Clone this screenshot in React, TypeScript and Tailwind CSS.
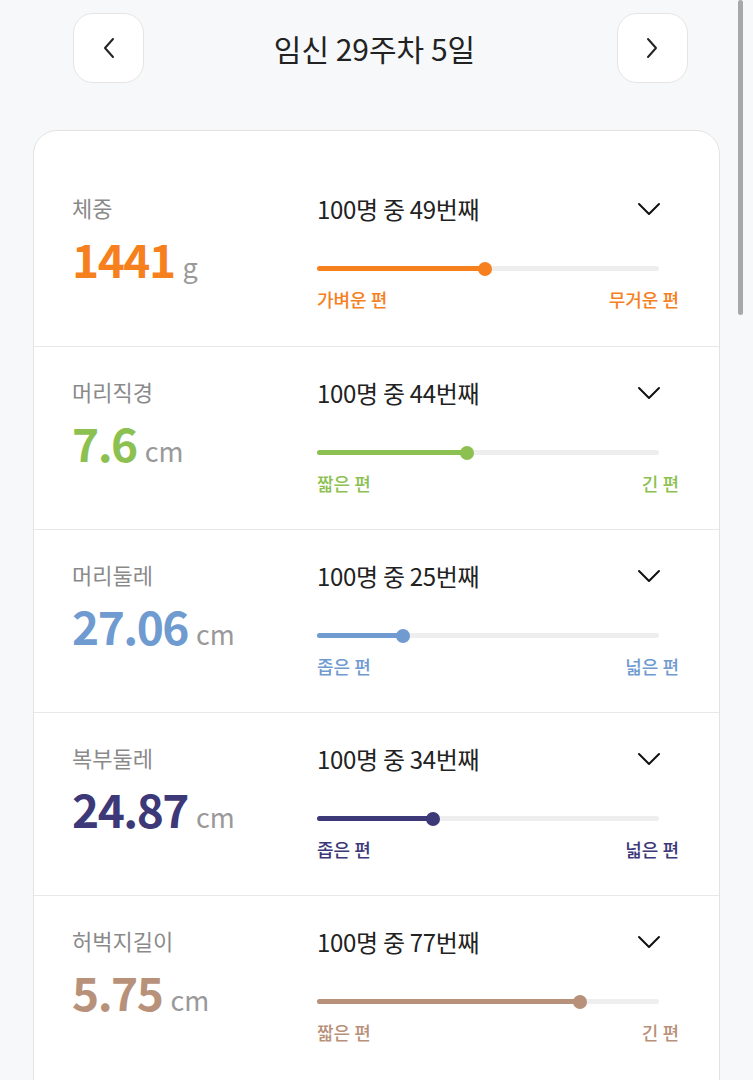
import React from 'react';

// Growth metric rows
const metrics = [
  { label: '체중', value: '1441', unit: 'g', rank: 49, color: '#f7801e', low: '가벼운 편', high: '무거운 편' },
  { label: '머리직경', value: '7.6', unit: 'cm', rank: 44, color: '#8cc152', low: '짧은 편', high: '긴 편' },
  { label: '머리둘레', value: '27.06', unit: 'cm', rank: 25, color: '#6f9bd1', low: '좁은 편', high: '넓은 편' },
  { label: '복부둘레', value: '24.87', unit: 'cm', rank: 34, color: '#3d3878', low: '좁은 편', high: '넓은 편' },
  { label: '허벅지길이', value: '5.75', unit: 'cm', rank: 77, color: '#b8917a', low: '짧은 편', high: '긴 편' },
];

const ChevronLeft = () => (
  <svg width="14" height="24" viewBox="0 0 14 24" fill="none">
    <path d="M11 3 L3 12 L11 21" stroke="#222" strokeWidth="2" strokeLinecap="round" strokeLinejoin="round" />
  </svg>
);

const ChevronRight = () => (
  <svg width="14" height="24" viewBox="0 0 14 24" fill="none">
    <path d="M3 3 L11 12 L3 21" stroke="#222" strokeWidth="2" strokeLinecap="round" strokeLinejoin="round" />
  </svg>
);

const ChevronDown = () => (
  <svg width="24" height="14" viewBox="0 0 24 14" fill="none">
    <path d="M2 2 L12 12 L22 2" stroke="#111" strokeWidth="2" strokeLinecap="round" strokeLinejoin="round" />
  </svg>
);

const MetricRow = ({ item, first }: { item: typeof metrics[number]; first: boolean }) => (
  <div className={`flex pl-[38px] pr-[40px] h-[183px] ${first ? '' : 'border-t border-[#e8e8e8]'}`}>
    <div className="w-[245px] flex flex-col pt-[29px]">
      <div className="text-[22px] leading-[30px] text-[#8a8a8a]">{item.label}</div>
      <div className="flex items-baseline mt-[8px] leading-[56px]">
        <span className="text-[46px] font-bold tracking-[-1.5px]" style={{ color: item.color }}>
          {item.value}
        </span>
        <span className="ml-[8px] text-[27px] text-[#999]">{item.unit}</span>
      </div>
    </div>
    <div className="flex-1 flex flex-col pt-[31px]">
      <div className="flex items-center justify-between h-[30px] pr-[18px]">
        <span className="text-[24px] text-[#222] tracking-[-0.3px]">100명 중 {item.rank}번째</span>
        <ChevronDown />
      </div>
      <div className="relative mt-[42px] mr-[20px] h-[5px] rounded-full bg-[#eeeeee]">
        <div className="h-full rounded-full" style={{ width: `${item.rank}%`, backgroundColor: item.color }} />
        <div
          className="absolute top-1/2 w-[14px] h-[14px] rounded-full -translate-x-1/2 -translate-y-1/2"
          style={{ left: `${item.rank}%`, backgroundColor: item.color }}
        />
      </div>
      <div className="flex justify-between mt-[16px] text-[18px] leading-[24px] font-medium" style={{ color: item.color }}>
        <span>{item.low}</span>
        <span>{item.high}</span>
      </div>
    </div>
  </div>
);

export default function App() {
  return (
    <div
      className="relative min-h-screen bg-[#f7f8fa] overflow-hidden"
      style={{ fontFamily: '"Noto Sans CJK KR", "Noto Sans", sans-serif' }}
    >
      <header className="flex items-center justify-between pt-[13px] pl-[73px] pr-[65px]">
        <button className="w-[71px] h-[70px] flex items-center justify-center bg-white border border-[#e5e5e5] rounded-[20px]">
          <ChevronLeft />
        </button>
        <h1 className="text-[30px] text-[#222] mr-[12px]">임신 29주차 5일</h1>
        <button className="w-[71px] h-[70px] flex items-center justify-center bg-white border border-[#e5e5e5] rounded-[20px]">
          <ChevronRight />
        </button>
      </header>

      <div className="mx-[33px] mt-[47px] bg-white border border-[#e3e3e3] rounded-[24px] pt-[32px] pb-[40px]">
        {metrics.map((item, i) => (
          <MetricRow key={item.label} item={item} first={i === 0} />
        ))}
      </div>

      {/* overlay scroll indicator */}
      <div className="absolute top-0 right-[10px] w-[5px] h-[315px] rounded-full bg-[#a8a8a8]" />
    </div>
  );
}
